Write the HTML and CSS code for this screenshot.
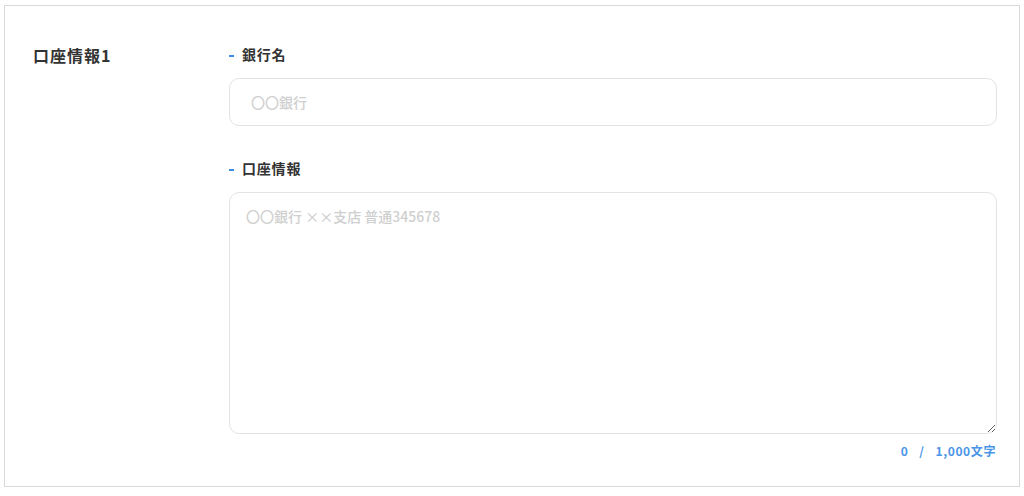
FILE: index.html
```html
<!DOCTYPE html>
<html lang="ja">
<head>
<meta charset="utf-8">
<link rel="stylesheet" href="styles.css">
</head>
<body>
<div class="panel">
  <div class="title">口座情報1</div>
  <div class="fields">
    <div class="field">
      <div class="label"><span class="dash"></span>銀行名</div>
      <input class="input" type="text" placeholder="〇〇銀行">
    </div>
    <div class="field second">
      <div class="label"><span class="dash"></span>口座情報</div>
      <textarea class="textarea" placeholder="〇〇銀行 ××支店 普通345678"></textarea>
      <div class="counter"><span>0</span><span class="sep">/</span><span>1,000文字</span></div>
    </div>
  </div>
</div>
</body>
</html>
```
FILE: styles.css
```css
* { box-sizing: border-box; }
body {
  margin: 0;
  background: #fff;
  font-family: "Noto Sans CJK JP", "Noto Sans", sans-serif;
  color: #333;
}
.panel {
  margin: 5px 0 0 4px;
  width: 1016px;
  height: 482px;
  border: 1px solid #d9d9d9;
  display: flex;
  padding: 38px 22px 0 28px;
}
.title {
  width: 196px;
  font-size: 16px;
  font-weight: 700;
  line-height: 24px;
  margin-top: -1px;
  letter-spacing: 1px;
}
.fields {
  flex: 1;
  display: flex;
  flex-direction: column;
}
.field.second { margin-top: 32px; }
.label {
  font-size: 14px;
  font-weight: 700;
  line-height: 20px;
  margin-bottom: 14px;
  color: #333;
  letter-spacing: 0.8px;
  display: flex;
  align-items: center;
}
.dash {
  display: inline-block;
  width: 5px;
  height: 2px;
  background: #3a8ee6;
  margin: 3px 8px 0 0;
}
.input, .textarea {
  display: block;
  width: 768px;
  border: 1px solid #e3e3e3;
  border-radius: 10px;
  font-family: inherit;
  font-size: 14px;
  font-weight: 500;
  color: #333;
  outline: none;
}
.input {
  height: 48px;
  padding: 0 21px;
}
.textarea {
  height: 242px;
  padding: 12px 16px;
  resize: vertical;
  line-height: 22px;
}
.input::placeholder, .textarea::placeholder { color: #cfcfcf; }
.counter {
  width: 768px;
  display: flex;
  justify-content: flex-end;
  font-size: 12px;
  font-weight: 700;
  color: #4a95e8;
  line-height: 16px;
  margin-top: 9px;
  padding-right: 1px;
  letter-spacing: 0.6px;
}
.sep { margin: 0 11px 0 11px; }
```
